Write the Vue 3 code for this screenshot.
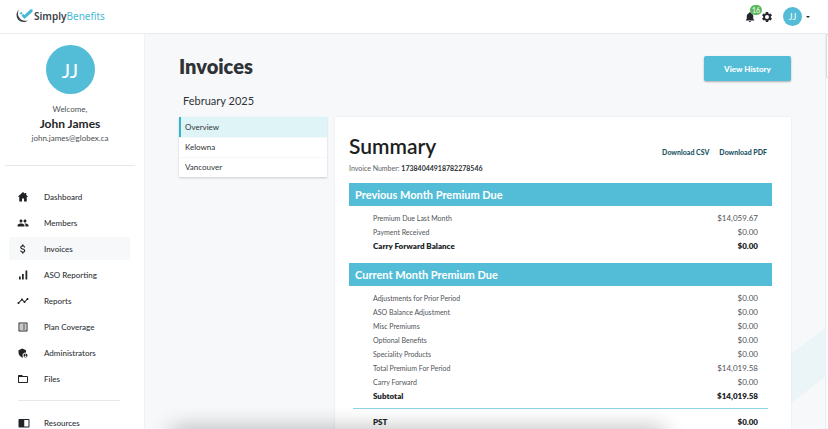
<script setup>
const icons = {
  home: 'M12 2 1.500 11.500H4.500V21H10V15H14V21H19.500V11.500H22.500L18.500 7.900V4H16V5.600Z',
  people: 'M16 11c1.660 0 2.990-1.340 2.990-3S17.660 5 16 5s-3 1.340-3 3 1.340 3 3 3zm-8 0c1.660 0 2.990-1.340 2.990-3S9.660 5 8 5 5 6.340 5 8s1.340 3 3 3zm0 2c-2.330 0-7 1.170-7 3.500V19h14v-2.500c0-2.330-4.670-3.500-7-3.500zm8 0c-.29 0-.62.02-.97.05 1.160.84 1.970 1.970 1.970 3.450V19h6v-2.500c0-2.330-4.670-3.500-7-3.500z',
  dollar: 'M11.8 10.9c-2.27-.59-3-1.2-3-2.15 0-1.09 1.01-1.85 2.7-1.85 1.78 0 2.44.85 2.5 2.1h2.21c-.07-1.72-1.12-3.3-3.21-3.81V3h-3v2.16c-1.94.42-3.5 1.68-3.5 3.61 0 2.31 1.91 3.46 4.7 4.13 2.5.6 3 1.48 3 2.41 0 .69-.49 1.79-2.7 1.79-2.06 0-2.87-.92-2.98-2.1h-2.2c.12 2.19 1.76 3.42 3.68 3.83V21h3v-2.15c1.95-.37 3.5-1.5 3.5-3.55 0-2.84-2.43-3.81-4.7-4.4z',
  bars: 'M4 15h3.500v6H4zM10 10h3.500v11H10zM17 3h3.500v18H17z',
  timeline: 'M23 8c0 1.1-.9 2-2 2-.18 0-.35-.02-.51-.07l-3.56 3.55c.05.16.07.34.07.52 0 1.1-.9 2-2 2s-2-.9-2-2c0-.18.02-.36.07-.52l-2.55-2.55c-.16.05-.34.07-.52.07s-.36-.02-.52-.07l-4.55 4.56c.05.16.07.33.07.51 0 1.1-.9 2-2 2s-2-.9-2-2 .9-2 2-2c.18 0 .35.02.51.07l4.56-4.55C8.02 9.36 8 9.18 8 9c0-1.1.9-2 2-2s2 .9 2 2c0 .18-.02.36-.07.52l2.55 2.55c.16-.05.34-.07.52-.07s.36.02.52.07l3.55-3.56C19.02 8.35 19 8.18 19 8c0-1.1.9-2 2-2s2 .9 2 2z',
  list: 'M19 5v14H5V5h14m1.100-2H3.900c-.5 0-.9.4-.9.9v16.200c0 .4.4.9.9.9h16.200c.4 0 .9-.5.9-.9V3.900c0-.5-.5-.9-.9-.9zM11 7h6v2h-6V7zm0 4h6v2h-6v-2zm0 4h6v2h-6v-2zM7 7h2v2H7V7zm0 4h2v2H7v-2zm0 4h2v2H7v-2z',
  admin: 'M17 11c.34 0 .67.04 1 .09V6.270L10.500 3 3 6.270v4.910c0 4.540 3.200 8.790 7.500 9.820.55-.13 1.080-.32 1.600-.55-.69-.98-1.100-2.170-1.100-3.450 0-3.310 2.690-6 6-6zM17 13c-2.210 0-4 1.790-4 4s1.790 4 4 4 4-1.790 4-4-1.790-4-4-4zm0 1.380c.62 0 1.120.51 1.120 1.120s-.51 1.120-1.120 1.120-1.120-.51-1.120-1.120.5-1.120 1.120-1.120zm0 5.370c-.93 0-1.740-.46-2.240-1.170.05-.72 1.510-1.080 2.240-1.080s2.190.36 2.240 1.080c-.5.710-1.310 1.170-2.240 1.170z',
  folder: 'M20 6h-8l-2-2H4c-1.100 0-1.990.9-1.990 2L2 18c0 1.100.9 2 2 2h16c1.100 0 2-.9 2-2V8c0-1.100-.9-2-2-2zm0 12H4V8h16v10z',
  book: 'M21 4H3c-1.100 0-2 .9-2 2v13c0 1.100.9 2 2 2h18c1.100 0 2-.9 2-2V6c0-1.100-.9-2-2-2zm0 15h-8.500V6H21v13z',
}

const nav = [
  { label: 'Dashboard', icon: 'home' },
  { label: 'Members', icon: 'people' },
  { label: 'Invoices', icon: 'dollar', active: true },
  { label: 'ASO Reporting', icon: 'bars' },
  { label: 'Reports', icon: 'timeline' },
  { label: 'Plan Coverage', icon: 'list' },
  { label: 'Administrators', icon: 'admin' },
  { label: 'Files', icon: 'folder' },
]

const divisions = ['Overview', 'Kelowna', 'Vancouver']

const previousMonth = [
  { label: 'Premium Due Last Month', amount: '$14,059.67' },
  { label: 'Payment Received', amount: '$0.00' },
  { label: 'Carry Forward Balance', amount: '$0.00', strong: true },
]

const currentMonth = [
  { label: 'Adjustments for Prior Period', amount: '$0.00' },
  { label: 'ASO Balance Adjustment', amount: '$0.00' },
  { label: 'Misc Premiums', amount: '$0.00' },
  { label: 'Optional Benefits', amount: '$0.00' },
  { label: 'Speciality Products', amount: '$0.00' },
  { label: 'Total Premium For Period', amount: '$14,019.58' },
  { label: 'Carry Forward', amount: '$0.00' },
  { label: 'Subtotal', amount: '$14,019.58', strong: true },
]

const taxes = [{ label: 'PST', amount: '$0.00', strong: true }]
</script>

<template>
  <div class="app">
    <header class="topbar">
      <a class="brand" href="#">
        <svg class="brand-mark" viewBox="0 0 36 32" aria-hidden="true">
          <path d="M6 3C-2 11 0 24 9 28.500 14 31 21 30.500 26 26 19 28.500 11 27 7 21 3.500 16 3 10 6 3Z" fill="#3c4248" />
          <path d="M7.500 11.500 11 8l3 3-3.500 3.500Z" fill="#45b9d6" />
          <path d="M11.500 16.500 15.500 12.500 18 15 31 2.500 35.500 3 35 8 18 23.500Z" fill="#45b9d6" />
        </svg>
        <span class="brand-name">Simply<span>Benefits</span></span>
      </a>
      <div class="tools">
        <button class="icon-button bell" aria-label="Notifications">
          <svg viewBox="0 0 24 24"><path d="M12 22c1.100 0 2-.9 2-2h-4c0 1.100.9 2 2 2zm6.500-6v-5.500c0-3.070-2.130-5.640-5-6.320V3.500a1.500 1.500 0 0 0-3 0v.68c-2.870.68-5 3.250-5 6.320V16l-2 2v1h17v-1z" /></svg>
          <span class="badge">16</span>
        </button>
        <button class="icon-button" aria-label="Settings">
          <svg viewBox="0 0 24 24"><path fill-rule="evenodd" d="M9.700 2h4.600l.6 3 1.700 1 2.900-1 2.300 4-2.300 2v2l2.300 2-2.300 4-2.900-1-1.700 1-.6 3H9.700l-.6-3-1.700-1-2.900 1-2.300-4 2.300-2v-2L2.200 9l2.300-4 2.900 1 1.700-1zM12 8a4 4 0 1 0 0 8 4 4 0 0 0 0-8z" /></svg>
        </button>
        <button class="account" aria-label="Account menu">
          <span class="avatar small">JJ</span>
          <span class="caret"></span>
        </button>
      </div>
    </header>

    <div class="body">
      <aside class="sidebar">
        <div class="profile">
          <div class="avatar large">JJ</div>
          <div class="welcome">Welcome,</div>
          <div class="name">John James</div>
          <div class="email">john.james@globex.ca</div>
        </div>
        <nav class="nav">
          <a v-for="item in nav" :key="item.label" href="#" class="nav-item" :class="{ active: item.active }">
            <svg viewBox="0 0 24 24" aria-hidden="true"><path :d="icons[item.icon]" /></svg>
            {{ item.label }}
          </a>
        </nav>
        <nav class="nav secondary">
          <a href="#" class="nav-item">
            <svg viewBox="0 0 24 24" aria-hidden="true"><path :d="icons.book" /></svg>
            Resources
          </a>
        </nav>
      </aside>

      <main class="main">
        <svg class="ribbon" viewBox="0 0 68 120" aria-hidden="true">
          <path d="M0 70 68 18V67L0 119Z" fill="#ebf4f7" />
        </svg>
        <div class="page-head">
          <h1>Invoices</h1>
          <button class="history">View History</button>
        </div>
        <h2 class="period">February 2025</h2>
        <div class="columns">
          <ul class="divisions">
            <li v-for="(name, i) in divisions" :key="name">
              <a href="#" :class="{ selected: i === 0 }">{{ name }}</a>
            </li>
          </ul>
          <section class="card">
            <div class="card-head">
              <h2 class="summary">Summary</h2>
              <div class="downloads">
                <a href="#">Download CSV</a>
                <a href="#">Download PDF</a>
              </div>
            </div>
            <p class="number">Invoice Number: <b>17384044918782278546</b></p>

            <h3 class="band">Previous Month Premium Due</h3>
            <table class="amounts">
              <tbody>
                <tr v-for="row in previousMonth" :key="row.label" :class="{ strong: row.strong }">
                  <th scope="row">{{ row.label }}</th>
                  <td>{{ row.amount }}</td>
                </tr>
              </tbody>
            </table>

            <h3 class="band">Current Month Premium Due</h3>
            <table class="amounts">
              <tbody>
                <tr v-for="row in currentMonth" :key="row.label" :class="{ strong: row.strong }">
                  <th scope="row">{{ row.label }}</th>
                  <td>{{ row.amount }}</td>
                </tr>
              </tbody>
            </table>
            <hr class="rule" />
            <table class="amounts taxes">
              <tbody>
                <tr v-for="row in taxes" :key="row.label" :class="{ strong: row.strong }">
                  <th scope="row">{{ row.label }}</th>
                  <td>{{ row.amount }}</td>
                </tr>
              </tbody>
            </table>
          </section>
        </div>
      </main>
      <div class="track"><div class="thumb"></div></div>
    </div>
    <div class="bottom-shade"></div>
  </div>
</template>

<style>
body {
  margin: 0;
}
</style>

<style scoped>
* {
  box-sizing: border-box;
}

.app {
  position: relative;
  display: flex;
  flex-direction: column;
  height: 100vh;
  overflow: hidden;
  background: #fff;
  color: #2f3337;
  font-family: Lato, "Liberation Sans", sans-serif;
  font-size: 8px;
  line-height: 12px;
}

a {
  color: inherit;
  text-decoration: none;
}

button {
  border: 0;
  padding: 0;
  background: none;
  font: inherit;
  color: inherit;
  cursor: pointer;
}

h1,
h2,
h3,
p,
ul {
  margin: 0;
  padding: 0;
}

.topbar {
  display: flex;
  flex: none;
  align-items: center;
  justify-content: space-between;
  height: 34px;
  padding: 0 18px 0 16px;
  border-bottom: 1px solid #e9ebed;
}

.brand {
  display: flex;
  align-items: center;
  gap: 1px;
  padding-bottom: 2px;
}

.brand-mark {
  width: 17px;
  height: 15px;
}

.brand-name {
  font-family: "Noto Sans", sans-serif;
  font-size: 10px;
  font-weight: 600;
  line-height: 16px;
  color: #3c4248;
}

.brand-name span {
  font-weight: 400;
  color: #45b9d6;
}

.tools {
  display: flex;
  align-items: center;
  gap: 5px;
}

.icon-button {
  position: relative;
  width: 12px;
  height: 12px;
}

.icon-button svg {
  display: block;
  width: 12px;
  height: 12px;
  fill: #24282c;
}

.badge {
  position: absolute;
  top: -6px;
  left: 6px;
  width: 12px;
  height: 10px;
  border-radius: 5px;
  background: #5cb85c;
  color: #fff;
  font-size: 7px;
  line-height: 10px;
  text-align: center;
}

.account {
  display: flex;
  align-items: center;
  gap: 4px;
  margin-left: 5px;
}

.avatar {
  display: flex;
  align-items: center;
  justify-content: center;
  border-radius: 50%;
  background: #53bdd7;
  color: #fff;
}

.avatar.small {
  width: 19px;
  height: 19px;
  font-size: 9px;
}

.avatar.large {
  width: 49px;
  height: 49px;
  font-size: 20px;
}

.caret {
  border: 2px solid transparent;
  border-top-color: #24282c;
  border-bottom: 0;
}

.body {
  display: flex;
  flex: 1;
  min-height: 0;
}

.sidebar {
  flex: none;
  width: 145px;
  border-right: 1px solid #eff1f4;
  overflow: hidden;
}

.profile {
  display: flex;
  flex-direction: column;
  align-items: center;
  margin: 0 9px 0 5px;
  padding: 11px 0 21px;
  border-bottom: 1px solid #e6e8ea;
}

.welcome {
  margin-top: 9px;
  color: #4b4f54;
}

.name {
  margin-top: 1px;
  font-size: 12px;
  font-weight: 700;
  line-height: 16px;
  color: #222528;
}

.email {
  color: #4b4f54;
}

.nav {
  display: flex;
  flex-direction: column;
  gap: 3px;
  padding: 19px 14px 10px 9px;
  font-weight: 500;
}

.nav.secondary {
  margin: 0 24px 0 18px;
  padding: 10px 0 0;
  border-top: 1px solid #e6e8ea;
}

.nav-item {
  display: flex;
  align-items: center;
  gap: 15px;
  height: 23px;
  padding-left: 8px;
}

.secondary .nav-item {
  gap: 14px;
  padding-left: 0;
}

.nav-item.active {
  background: #f7f8fa;
}

.nav-item svg {
  width: 12px;
  height: 12px;
  fill: #212427;
}

.main {
  position: relative;
  flex: 1;
  min-width: 0;
  padding: 22px 34px 0;
  background: #f7f8fa;
  overflow: hidden;
}

.ribbon {
  position: absolute;
  right: 0;
  top: 276px;
  width: 68px;
  height: 120px;
}

.page-head {
  display: flex;
  align-items: flex-start;
  justify-content: space-between;
}

h1 {
  font-size: 20px;
  line-height: 20px;
  font-weight: 800;
  color: #2f3337;
}

.history {
  width: 87px;
  height: 25px;
  border-radius: 2px;
  background: #53bdd7;
  box-shadow: 0 1px 2px rgba(0, 0, 0, 0.3);
  color: #fff;
  font-weight: 900;
}

.period {
  margin: 12px 4px 9px;
  font-size: 11px;
  font-weight: 400;
  line-height: 15px;
}

.columns {
  position: relative;
  display: grid;
  grid-template-columns: 148px 1fr;
  align-items: start;
  gap: 8px;
}

.divisions {
  list-style: none;
  background: #fff;
  box-shadow: 0 1px 2px rgba(0, 0, 0, 0.18);
}

.divisions a {
  display: block;
  padding-left: 6px;
  line-height: 20px;
}

.divisions li + li {
  box-shadow: inset 0 1px #f6f7f8;
}

.divisions a.selected {
  padding-left: 4px;
  border-left: 2px solid #35b4cf;
  background: #dff4f6;
}

.card {
  padding: 15px 19px 16px 14px;
  background: #fff;
  box-shadow: 0 0 2px rgba(0, 0, 0, 0.08);
}

.card-head {
  display: flex;
  align-items: center;
  justify-content: space-between;
  padding-right: 5px;
}

.summary {
  font-size: 21px;
  font-weight: 600;
  line-height: 27px;
  color: #1c1f21;
}

.downloads {
  display: flex;
  gap: 10px;
  margin-top: 12px;
  font-size: 7px;
  font-weight: 900;
  color: #1d5566;
}

.number {
  margin: 3px 0 9px;
  font-size: 7px;
  color: #5d6267;
}

.number b {
  color: #2f3337;
}

.band {
  padding-left: 6px;
  background: #53bdd7;
  color: #fff;
  font-size: 11px;
  font-weight: 700;
  line-height: 23px;
}

.amounts {
  width: 100%;
  margin: 5px 0 9px;
  border-collapse: collapse;
}

.amounts th,
.amounts td {
  padding: 0 14px 0 24px;
  font-weight: 400;
  line-height: 14px;
  color: #505459;
}

.amounts th {
  text-align: left;
  font-size: 7px;
}

.amounts td {
  text-align: right;
  font-size: 8px;
}

.amounts .strong th,
.amounts .strong td {
  font-size: 8px;
  font-weight: 800;
  line-height: 15px;
  color: #222528;
}

.amounts:has(+ .rule) {
  margin-bottom: 4px;
}

.rule {
  height: 1px;
  margin: 0 4px;
  border: 0;
  background: #8fd3e6;
}

.amounts.taxes {
  margin-top: 6px;
}

.track {
  flex: none;
  width: 3px;
  border-left: 1px solid #eceef0;
  background: #fafbfc;
}

.thumb {
  height: 44px;
  border: 1px solid #d5dcd9;
  border-right: 0;
  border-radius: 3px 0 0 3px;
  background: #fff;
}

.bottom-shade {
  position: absolute;
  left: 21%;
  right: 20%;
  bottom: -12px;
  height: 8px;
  border-radius: 8px;
  box-shadow: 0 0 22px 4px rgba(0, 0, 0, 0.32);
}
</style>
